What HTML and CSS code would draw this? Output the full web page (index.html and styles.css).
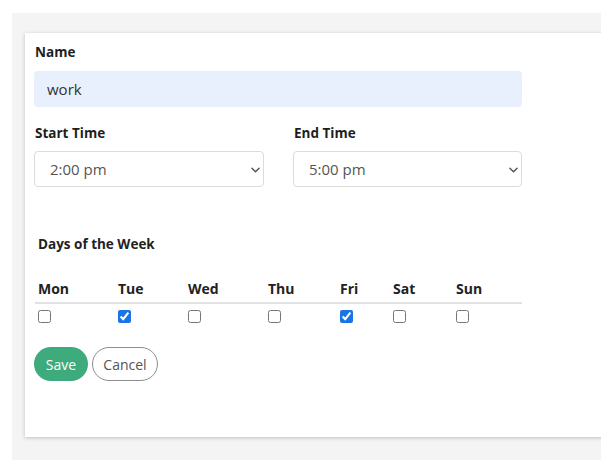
FILE: index.html
```html
<!DOCTYPE html>
<html lang="en">
<head>
<meta charset="utf-8">
<title>Edit schedule</title>
<link rel="stylesheet" href="styles.css">
</head>
<body>
<div class="page">
  <form class="card">
    <div class="field">
      <label class="label" for="name">Name</label>
      <input class="text-input" id="name" type="text" value="work">
    </div>

    <div class="time-row">
      <div class="field">
        <label class="label" for="start">Start Time</label>
        <div class="select-wrap">
          <select class="select" id="start">
            <option>2:00 pm</option>
          </select>
          <svg class="chevron" viewBox="0 0 10 6" width="9" height="6"><path d="M1 1l4 4 4-4" fill="none" stroke="#555" stroke-width="1.6" stroke-linecap="round" stroke-linejoin="round"/></svg>
        </div>
      </div>
      <div class="field">
        <label class="label" for="end">End Time</label>
        <div class="select-wrap">
          <select class="select" id="end">
            <option>5:00 pm</option>
          </select>
          <svg class="chevron" viewBox="0 0 10 6" width="9" height="6"><path d="M1 1l4 4 4-4" fill="none" stroke="#555" stroke-width="1.6" stroke-linecap="round" stroke-linejoin="round"/></svg>
        </div>
      </div>
    </div>

    <h3 class="days-title">Days of the Week</h3>

    <div class="days">
      <div class="day-head">Mon</div>
      <div class="day-head">Tue</div>
      <div class="day-head">Wed</div>
      <div class="day-head">Thu</div>
      <div class="day-head">Fri</div>
      <div class="day-head">Sat</div>
      <div class="day-head">Sun</div>
      <div class="day-cell"><input type="checkbox" class="check"></div>
      <div class="day-cell"><input type="checkbox" class="check" checked></div>
      <div class="day-cell"><input type="checkbox" class="check"></div>
      <div class="day-cell"><input type="checkbox" class="check"></div>
      <div class="day-cell"><input type="checkbox" class="check" checked></div>
      <div class="day-cell"><input type="checkbox" class="check"></div>
      <div class="day-cell"><input type="checkbox" class="check"></div>
    </div>

    <div class="actions">
      <button type="button" class="btn btn-save">Save</button>
      <button type="button" class="btn btn-cancel">Cancel</button>
    </div>
  </form>
</div>
</body>
</html>
```

FILE: styles.css
```css
* {
  box-sizing: border-box;
}

html, body {
  margin: 0;
  background: #ffffff;
  overflow: hidden;
  height: 100%;
}

body {
  font-family: "Open Sans", "Liberation Sans", sans-serif;
  color: #222;
}

/* grey canvas; the card runs off its right edge */
.page {
  margin: 13px 0 0 12px;
  background: #f4f4f4;
  padding: 20px 0 0 13px;
  min-height: 447px;
  overflow: hidden;
}

.card {
  background: #fff;
  width: 640px;
  padding: 9px 0 56px 9px;
  box-shadow: 0 1px 4px rgba(0, 0, 0, 0.22);
  margin-bottom: 6px;
}

.field {
  display: flex;
  flex-direction: column;
}

.label {
  font-size: 13.5px;
  font-weight: 700;
  line-height: 20px;
  margin: 0 0 9px 1px;
  color: #1e1e1e;
}

.text-input {
  width: 488px;
  height: 36px;
  border: none;
  border-radius: 4px;
  background: #e8f0fe;
  font-family: inherit;
  font-size: 15px;
  color: #333;
  padding: 0 13px;
  outline: none;
}

.time-row {
  display: grid;
  grid-template-columns: 230px 229px;
  column-gap: 29px;
  margin-top: 16px;
}

.time-row .label {
  margin-bottom: 8px;
}

.select-wrap {
  position: relative;
}

.select {
  appearance: none;
  -webkit-appearance: none;
  width: 100%;
  height: 36px;
  border: 1px solid #dcdcdc;
  border-radius: 4px;
  background: #fff;
  font-family: inherit;
  font-size: 15px;
  color: #555;
  padding: 0 14px 0 15px;
  outline: none;
}

.chevron {
  position: absolute;
  right: 4px;
  top: 16px;
  pointer-events: none;
}

.days-title {
  margin: 47px 0 0 4px;
  font-size: 13.5px;
  font-weight: 700;
  line-height: 20px;
}

.days {
  display: grid;
  grid-template-columns: 80px 70px 80px 72px 53px 63px 69px;
  width: 487px;
  margin: 25px 0 0 1px;
}

.day-head {
  font-size: 14px;
  font-weight: 700;
  line-height: 20px;
  padding: 0 0 3px 3px;
  border-bottom: 2px solid #e2e2e2;
  color: #222;
}

.day-cell {
  padding: 6px 0 0 3px;
  height: 19px;
}

.check {
  margin: 0;
  width: 13px;
  height: 13px;
  display: block;
  accent-color: #1b74e4;
}

.actions {
  display: flex;
  gap: 4px;
  margin-top: 24px;
}

.btn {
  height: 34px;
  border-radius: 17px;
  font-family: inherit;
  font-size: 14px;
  padding: 0;
  cursor: pointer;
}

.btn-save {
  width: 54px;
  background: #3dab7b;
  border: none;
  color: #fff;
}

.btn-cancel {
  width: 66px;
  background: #fff;
  border: 1px solid #8e8e8e;
  color: #555;
}
```
